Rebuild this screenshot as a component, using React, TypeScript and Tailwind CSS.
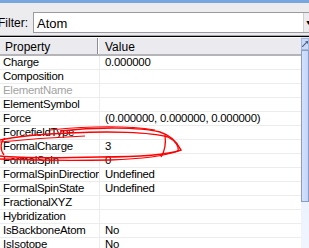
const rows: { name: string; value: string; dim?: boolean }[] = [
  { name: 'Charge', value: '0.000000' },
  { name: 'Composition', value: '' },
  { name: 'ElementName', value: '', dim: true },
  { name: 'ElementSymbol', value: '' },
  { name: 'Force', value: '(0.000000, 0.000000, 0.000000)' },
  { name: 'ForcefieldType', value: '' },
  { name: 'FormalCharge', value: '3' },
  { name: 'FormalSpin', value: '0' },
  { name: 'FormalSpinDirection', value: 'Undefined' },
  { name: 'FormalSpinState', value: 'Undefined' },
  { name: 'FractionalXYZ', value: '' },
  { name: 'Hybridization', value: '' },
  { name: 'IsBackboneAtom', value: 'No' },
  { name: 'IsIsotope', value: 'No' },
];

export default function App() {
  return (
    <div className="relative w-[309px] h-[248px] overflow-hidden bg-[#ecebee] text-[11.4px] tracking-[-0.25px] leading-none text-black font-['Liberation_Sans',Arial,sans-serif]">
      {/* title strip */}
      <div className="h-[3px] bg-[#78a6de]" />

      {/* Filter row */}
      <div className="flex items-start h-[32px] pt-[9px]">
        <span className="ml-[-2px] w-[35px] pt-[5px] text-[12px] tracking-normal">Filter:</span>
        <div className="flex h-[21px] flex-1 border border-[#9c9a9f] border-r-0 bg-white">
          <span className="flex-1 pl-[3px] pt-[4px] text-[13px] tracking-normal">Atom</span>
          <div className="w-[6px] ml-[-1px] flex items-center border-l border-[#d0cfd3] bg-[#ecebee]">
            <span className="text-[7px] pl-[1px]">▼</span>
          </div>
        </div>
      </div>
      <div className="h-[1px] bg-[#a8a7ab]" />
      <div className="h-[1px] bg-black" />

      {/* grid + scrollbar */}
      <div className="flex">
        <div className="flex-1">
          <div className="flex h-[19px] text-[12px] tracking-normal bg-[#ebeaee] border-t border-[#fdfdfd] border-b-2 border-b-[#b5b4b8]">
            <div className="w-[98px] pl-[5px] pt-[3px] border-r border-[#8d8c90]">Property</div>
            <div className="flex-1 pl-[6px] pt-[3px] border-l border-white">Value</div>
          </div>
          <div className="bg-white">
            {rows.map((r) => (
              <div key={r.name} className="flex h-[14px] border-b border-[#ececec]">
                <div className={`w-[100px] pl-[3px] pt-[1px] whitespace-nowrap overflow-hidden border-r border-[#ececec] ${r.dim ? 'text-[#a3a3a3]' : ''}`}>
                  {r.name}
                </div>
                <div className="flex-1 pl-[5px] pt-[1px] whitespace-nowrap overflow-hidden">{r.value}</div>
              </div>
            ))}
          </div>
        </div>
        <div className="w-[8px] flex flex-col bg-gradient-to-b from-[#e3ecfd] to-[#f0f5fe]">
          <div className="h-[12px] mt-[1px] border border-[#a4b6dc] bg-[#c9d9f8] flex items-center justify-center">
            <svg width="6" height="6" viewBox="0 0 6 6">
              <path d="M0 6 L6 0 M3 0 L6 0 L6 3" stroke="#4d6185" strokeWidth="1.2" fill="none" />
            </svg>
          </div>
          <div className="h-[152px] border border-[#8a9cc2] bg-gradient-to-r from-[#d3e1fb] to-[#c3d6fa]" />
        </div>
      </div>

      {/* hand-drawn red marker */}
      <svg className="absolute left-0 top-0 pointer-events-none" width="309" height="248" viewBox="0 0 309 248">
        <g stroke="#ff0000" fill="none">
          <path
            d="M60 131 C95 127 140 127 160 132 C172 136 178 144 181 150 C170 154 140 157 100 157 C60 158 20 158 0 156"
            strokeWidth="1.5"
          />
          <path
            d="M0 140 C20 136 45 134 70 133 C110 131 150 132 168 137 C176 141 179 147 178 151 C165 156 140 159 110 160 C70 161 25 160 0 159"
            strokeWidth="1.3"
          />
          <path d="M5 138 C0 142 0 150 4 155" strokeWidth="1.3" />
          <path d="M165 135 C166 143 165 151 161 157" strokeWidth="1.3" />
          <path d="M50 130 C90 126 130 126 155 130" strokeWidth="1.2" />
          <path d="M0 142 C30 139 60 137 85 136" strokeWidth="1.2" />
        </g>
      </svg>
    </div>
  );
}
